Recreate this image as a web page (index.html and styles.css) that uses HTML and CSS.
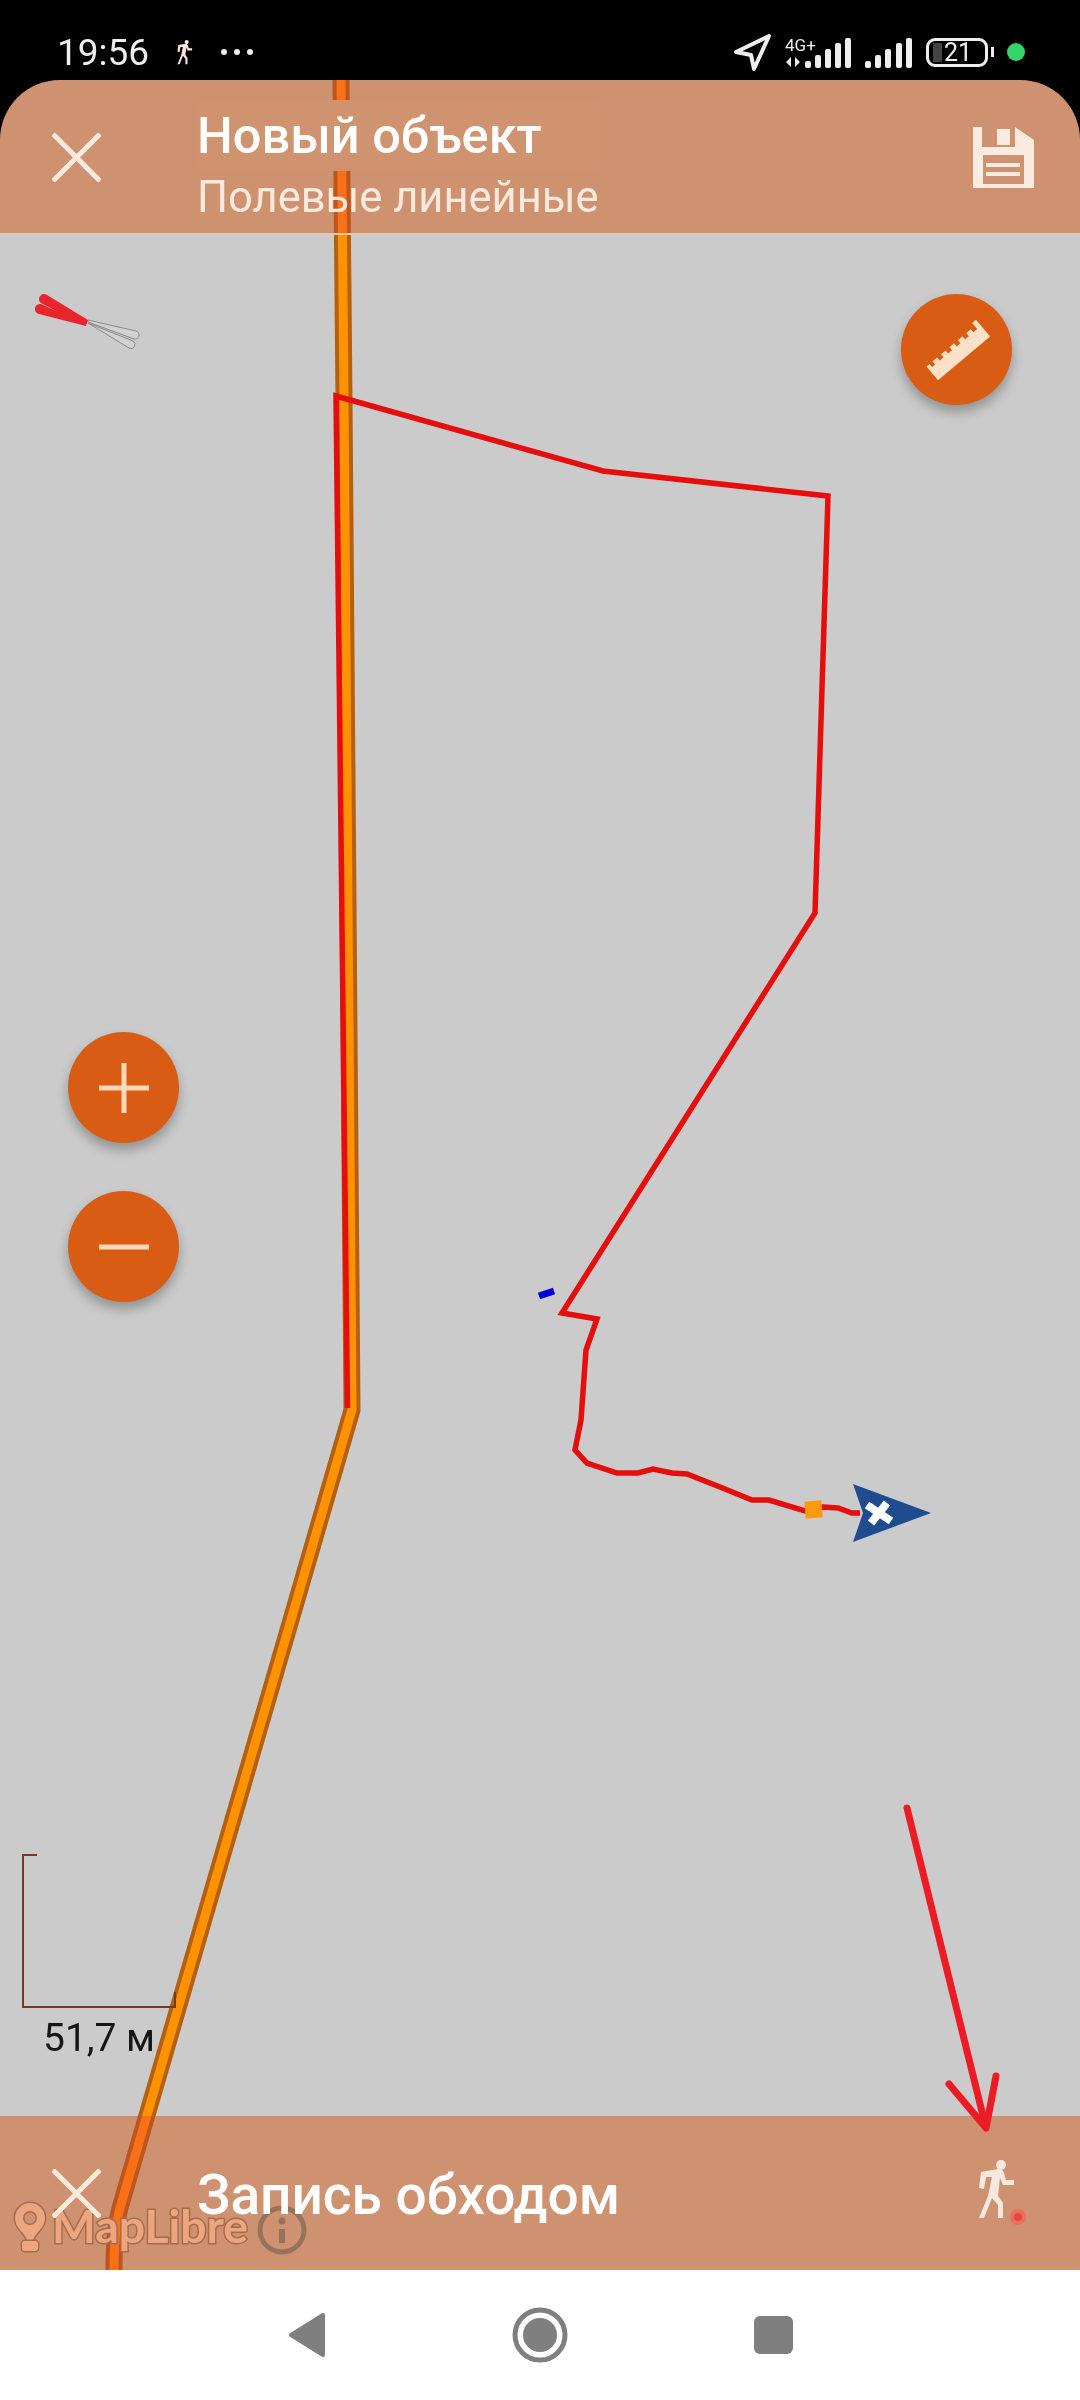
FILE: index.html
```html
<!DOCTYPE html>
<html lang="ru">
<head>
  <meta charset="UTF-8">
  <meta name="viewport" content="width=device-width, initial-scale=1.0">
  <title>Новый объект</title>
  <link rel="stylesheet" href="styles.css">
</head>
<body>
  <div class="screen">
    <!-- map sits under both bars, they tint it -->
    <div class="map">
      <svg class="map-canvas" viewBox="0 80 1080 2190">
        <path class="road-casing" d="M341 80 L344 400 L352 1410 L120 2208 Q114 2230 114 2270"/>
        <path class="road-fill" d="M341 80 L344 400 L352 1410 L120 2208 Q114 2230 114 2270"/>
        <path class="track" d="M347.500 1408 L336 396 L603 471 L828 496 L815 913 L562 1313 L597 1319 L586 1350 L581 1420 L575 1450 L587 1463 L617 1473 L638 1473 L653 1469 L672 1473 L687 1474 L720 1487 L752 1500 L769 1500 L805 1511 L823 1507 L838 1508 L852 1513 L860 1513"/>
        <line class="blue-mark" x1="539" y1="1296" x2="554" y2="1291"/>
        <rect class="vertex" x="805" y="1501" width="17" height="17" transform="rotate(-5 813 1509)"/>
        <path class="cursor" d="M853 1484 L931 1513 L853 1542 L863 1513 Z"/>
        <path class="cursor-x" d="M867 1505 L891 1521 M887 1503 L871 1523"/>

        <!-- compass -->
        <path class="needle-light" d="M88 320 L136 331 A4 4 0 0 1 134 339 L88 322 Z M88 323 L133 341 A4 4 0 0 1 129 348 Z"/>
        <path class="needle-red" d="M88 320 L47 295 A5 5 0 0 0 41 303 L58 312 L41 304 A5 5 0 0 0 39 314 L86 326 Z"/>

        <!-- attribution -->
        <g class="logo">
          <path d="M30 2203 A15 15 0 0 1 45 2218 C45 2228 35 2233 33 2240 L27 2240 C25 2233 15 2228 15 2218 A15 15 0 0 1 30 2203 Z M30 2211 A7 7 0 1 0 30 2225 A7 7 0 1 0 30 2211 Z"/>
          <rect x="22" y="2241" width="16" height="10" rx="3"/>
          <text x="52" y="2243" textLength="196" lengthAdjust="spacingAndGlyphs">MapLibre</text>
        </g>
        <circle class="info-ring" cx="282" cy="2230" r="22"/>
        <rect class="info-mark" x="279" y="2229" width="6" height="14"/>
        <circle class="info-mark" cx="282" cy="2221" r="3.500"/>
      </svg>

      <button class="fab fab-ruler">
        <svg width="70" height="70" viewBox="-35 -35 70 70">
          <path class="ruler" transform="rotate(-40)" d="M-34 11 H34 V-11 H29 V-3 H24 V-7 H18 V-3 H13 V-7 H7 V-3 H2 V-7 H-4 V-3 H-9 V-7 H-15 V-3 H-20 V-7 H-26 V-3 H-30 V-7 H-34 Z"/>
        </svg>
      </button>

      <div class="zoom-controls">
        <button class="fab">
          <svg width="50" height="50" viewBox="0 0 50 50"><path class="zoom-sign" d="M0 25 H50 M25 0 V50"/></svg>
        </button>
        <button class="fab">
          <svg width="50" height="50" viewBox="0 0 50 50"><path class="zoom-sign" d="M0 25 H50"/></svg>
        </button>
      </div>

      <div class="scale">
        <div class="scale-box"></div>
        <div class="scale-label">51,7 м</div>
      </div>
    </div>

    <div class="status-bar">
      <span class="clock">19:56</span>
      <svg class="status-walker" width="16" height="25" viewBox="0 0 36 60">
        <circle class="walker" cx="22" cy="5" r="5"/>
        <path class="walker" d="M0 28 L2 12 L19 9 Q24 9 25 13 L27 20 L35 20 L35 25 L24 25 L21 18 L19 36 L24 43 L24 58 L19 58 L19 45 L13 38 L5 58 L0 58 L9 36 L13 17 L7 17 L5 29 Z"/>
      </svg>
      <span class="more-dots"><i></i><i></i><i></i></span>

      <div class="status-right">
        <svg width="37" height="37" viewBox="0 0 37 37">
          <path class="gps-arrow" d="M35 2 L2 18 L17 21 L20 35 Z"/>
        </svg>
        <svg class="net" width="66" height="32" viewBox="0 0 66 32">
          <text x="0" y="15">4G+</text>
          <path d="M6 21 V31 L1 26 Z M10 21 V31 L15 26 Z"/>
          <rect x="20" y="25" width="6" height="7" rx="2"/>
          <rect x="30" y="19" width="6" height="13" rx="2"/>
          <rect x="40" y="13" width="6" height="19" rx="2"/>
          <rect x="50" y="7" width="6" height="25" rx="2"/>
          <rect x="60" y="2" width="6" height="30" rx="2"/>
        </svg>
        <svg class="net" width="47" height="32" viewBox="0 0 47 32">
          <rect x="0" y="25" width="6" height="7" rx="2"/>
          <rect x="10" y="19" width="6" height="13" rx="2"/>
          <rect x="20" y="13" width="6" height="19" rx="2"/>
          <rect x="31" y="7" width="6" height="25" rx="2"/>
          <rect x="41" y="2" width="6" height="30" rx="2"/>
        </svg>
        <div class="battery"><span class="battery-level"></span>21</div>
        <span class="green-dot"></span>
      </div>
    </div>

    <div class="appbar">
      <svg class="close" width="49" height="49" viewBox="0 0 49 49"><path d="M1 1 L48 48 M48 1 L1 48"/></svg>
      <div class="titles">
        <div class="title">Новый объект</div>
        <div class="subtitle">Полевые линейные</div>
      </div>
      <svg class="save" width="61" height="61" viewBox="0 0 61 61">
        <path fill-rule="evenodd" d="M0 0 H9 V20 H42 V0 L61 13 V61 H0 Z M10 28 V57 H51 V28 Z"/>
        <path d="M13 36 H47 V40 H13 Z M13 45 H47 V49 H13 Z"/>
        <rect x="24" y="2" width="13" height="16"/>
      </svg>
    </div>

    <div class="map-spacer"></div>

    <div class="bottombar">
      <svg class="close" width="49" height="49" viewBox="0 0 49 49"><path d="M1 1 L48 48 M48 1 L1 48"/></svg>
      <div class="bottom-title">Запись обходом</div>
      <svg class="bottom-walker" width="48" height="66" viewBox="0 0 48 66">
        <circle class="walker" cx="22" cy="5" r="5"/>
        <path class="walker" d="M0 28 L2 12 L19 9 Q24 9 25 13 L27 20 L35 20 L35 25 L24 25 L21 18 L19 36 L24 43 L24 58 L19 58 L19 45 L13 38 L5 58 L0 58 L9 36 L13 17 L7 17 L5 29 Z"/>
        <circle class="rec-outer" cx="39" cy="57" r="8"/>
        <circle class="rec-inner" cx="39" cy="57" r="4"/>
      </svg>
    </div>

    <div class="navbar">
      <svg width="38" height="46" viewBox="0 0 38 46"><path class="nav-icon" d="M35 3 V43 L3 23 Z"/></svg>
      <svg width="56" height="56" viewBox="0 0 56 56">
        <circle class="home-ring" cx="28" cy="28" r="25"/>
        <circle class="nav-icon" cx="28" cy="28" r="15"/>
      </svg>
      <span class="recent"></span>
    </div>

    <!-- hand drawn arrow on top of the screenshot -->
    <svg class="annotation" viewBox="0 0 1080 2400">
      <path d="M907 1808 L986 2128 M949 2084 L986 2128 L996 2076"/>
    </svg>
  </div>
</body>
</html>
```

FILE: styles.css
```css
body {
  margin: 0;
  background: #000;
  font-family: 'Roboto', sans-serif;
}
.screen {
  position: relative;
  width: 1080px;
  height: 2400px;
  display: flex;
  flex-direction: column;
  overflow: hidden;
}

/* map */
.map {
  position: absolute;
  top: 80px;
  left: 0;
  width: 1080px;
  height: 2190px;
  background: #cbcbcb;
  border-radius: 60px 60px 0 0;
  overflow: hidden;
}
.map-canvas {
  display: block;
  width: 1080px;
  height: 2190px;
  fill: none;
}
.road-casing {
  stroke: #b4600f;
  stroke-width: 17;
}
.road-fill {
  stroke: #ff9200;
  stroke-width: 9;
}
.track {
  stroke: #e60d0d;
  stroke-width: 5.500;
  stroke-linejoin: miter;
}
.blue-mark {
  stroke: #0000dc;
  stroke-width: 7;
}
.vertex {
  fill: #ff9a0e;
}
.cursor {
  fill: #1f4c8f;
}
.cursor-x {
  stroke: #fff;
  stroke-width: 8;
}
.needle-red {
  fill: #e9242a;
}
.needle-light {
  fill: #d2d2d2;
  stroke: #8a8a8a;
  stroke-width: 1;
}
.logo {
  fill: #eee;
  stroke: #97877d;
  stroke-width: 3;
  paint-order: stroke;
}
.logo text {
  font-family: 'Lato', sans-serif;
  font-weight: 700;
  font-size: 46px;
}
.info-ring {
  stroke: #84939e;
  stroke-width: 5;
}
.info-mark {
  fill: #84939e;
}

/* round buttons */
.fab {
  display: flex;
  align-items: center;
  justify-content: center;
  width: 111px;
  height: 111px;
  padding: 0;
  border: none;
  border-radius: 50%;
  background: #d95c14;
  box-shadow: 0 7px 12px rgba(0, 0, 0, 0.28);
}
.fab-ruler {
  position: absolute;
  top: 214px;
  left: 901px;
}
.ruler {
  fill: #fde0c8;
}
.zoom-controls {
  position: absolute;
  top: 952px;
  left: 68px;
  display: flex;
  flex-direction: column;
  gap: 48px;
}
.zoom-sign {
  fill: none;
  stroke: #ffd9b8;
  stroke-width: 5;
}

/* scale bar */
.scale {
  position: absolute;
  top: 1774px;
  left: 22px;
  width: 154px;
}
.scale-box {
  position: relative;
  height: 152px;
  border-left: 2px solid #6f3d26;
  border-bottom: 2px solid #6f3d26;
}
.scale-box::before {
  content: "";
  position: absolute;
  top: 0;
  left: 0;
  width: 13px;
  height: 2px;
  background: #6f3d26;
}
.scale-box::after {
  content: "";
  position: absolute;
  right: 0;
  bottom: 0;
  width: 2px;
  height: 14px;
  background: #6f3d26;
}
.scale-label {
  margin: 6px 0 0 21px;
  font-size: 39px;
  line-height: 48px;
  color: #151515;
  white-space: nowrap;
}

/* status bar */
.status-bar {
  position: relative;
  display: flex;
  align-items: center;
  box-sizing: border-box;
  height: 80px;
  padding: 24px 55px 0 57px;
  color: #eee;
}
.clock {
  font-size: 37px;
  width: 91px;
}
.status-walker {
  margin-left: 29px;
}
.walker {
  fill: #f6e8de;
}
.more-dots {
  display: flex;
  gap: 7px;
  margin-left: 28px;
}
.more-dots i {
  width: 6px;
  height: 6px;
  border-radius: 50%;
  background: #eee;
}
.status-right {
  display: flex;
  align-items: center;
  gap: 14px;
  margin-left: auto;
}
.gps-arrow {
  fill: none;
  stroke: #eee;
  stroke-width: 4;
  stroke-linejoin: round;
}
.net {
  fill: #eee;
  overflow: visible;
}
.net text {
  font-size: 17px;
}
.battery {
  position: relative;
  display: flex;
  align-items: center;
  box-sizing: border-box;
  width: 62px;
  height: 29px;
  padding-left: 4px;
  border: 3px solid #eee;
  border-radius: 9px;
  font-size: 25px;
  margin-right: 5px;
}
.battery::after {
  content: "";
  position: absolute;
  right: -9px;
  top: 6px;
  width: 3px;
  height: 10px;
  background: #eee;
}
.battery-level {
  width: 9px;
  height: 19px;
  margin-right: 2px;
  background: #444;
}
.green-dot {
  width: 18px;
  height: 18px;
  border-radius: 50%;
  background: #33d46a;
}

/* top and bottom bars, the tint multiplies over the map */
.appbar, .bottombar {
  position: relative;
  display: flex;
  box-sizing: border-box;
}
.appbar::before, .bottombar::before {
  content: "";
  position: absolute;
  top: 0;
  right: 0;
  bottom: 0;
  left: 0;
  background: #ffb98c;
  mix-blend-mode: multiply;
}
.appbar::after, .bottombar::after {
  content: "";
  position: absolute;
  top: 0;
  right: 0;
  bottom: 0;
  left: 0;
  background: rgba(223, 147, 115, 0.2);
}
.appbar::after {
  border-radius: 60px 60px 0 0;
}
.appbar > *, .bottombar > * {
  position: relative;
  z-index: 1;
}
.appbar {
  height: 155px;
  padding-left: 52px;
  border-bottom: 2px solid #dfc6b5;
}
.close {
  flex-shrink: 0;
  margin-top: 53px;
  fill: none;
  stroke: #fdeadc;
  stroke-width: 5;
}
.titles {
  margin-left: 96px;
  padding-top: 20px;
}
.title {
  height: 71px;
  font-size: 50.500px;
  font-weight: 500;
  line-height: 71px;
  color: #fff;
  background: #cf936f;
}
.subtitle {
  padding-top: 2px;
  font-size: 43.500px;
  line-height: 50px;
  color: #fce9dd;
}
.save {
  position: absolute;
  top: 47px;
  left: 973px;
  fill: #f9ebdf;
}
.map-spacer {
  flex: 1;
}
.bottombar {
  height: 154px;
  padding-left: 52px;
}
.bottom-title {
  margin-left: 96px;
  padding-top: 46px;
  font-size: 55px;
  font-weight: 500;
  line-height: 66px;
  color: #fff;
}
.bottom-walker {
  position: absolute;
  top: 44px;
  left: 979px;
}
.rec-outer {
  fill: #e8705f;
}
.rec-inner {
  fill: #e5483f;
}

/* navigation */
.navbar {
  position: relative;
  display: flex;
  align-items: center;
  justify-content: center;
  gap: 186px;
  height: 130px;
  background: #fff;
}
.nav-icon {
  fill: #7f7f7f;
  stroke: #7f7f7f;
  stroke-width: 4;
  stroke-linejoin: round;
}
.home-ring {
  fill: none;
  stroke: #7f7f7f;
  stroke-width: 5;
}
.recent {
  width: 39px;
  height: 38px;
  border-radius: 6px;
  background: #7f7f7f;
}

.annotation {
  position: absolute;
  top: 0;
  left: 0;
  z-index: 2;
  width: 1080px;
  height: 2400px;
  fill: none;
  stroke: #ed1c24;
  stroke-width: 7;
  stroke-linecap: round;
  stroke-linejoin: round;
}
```
